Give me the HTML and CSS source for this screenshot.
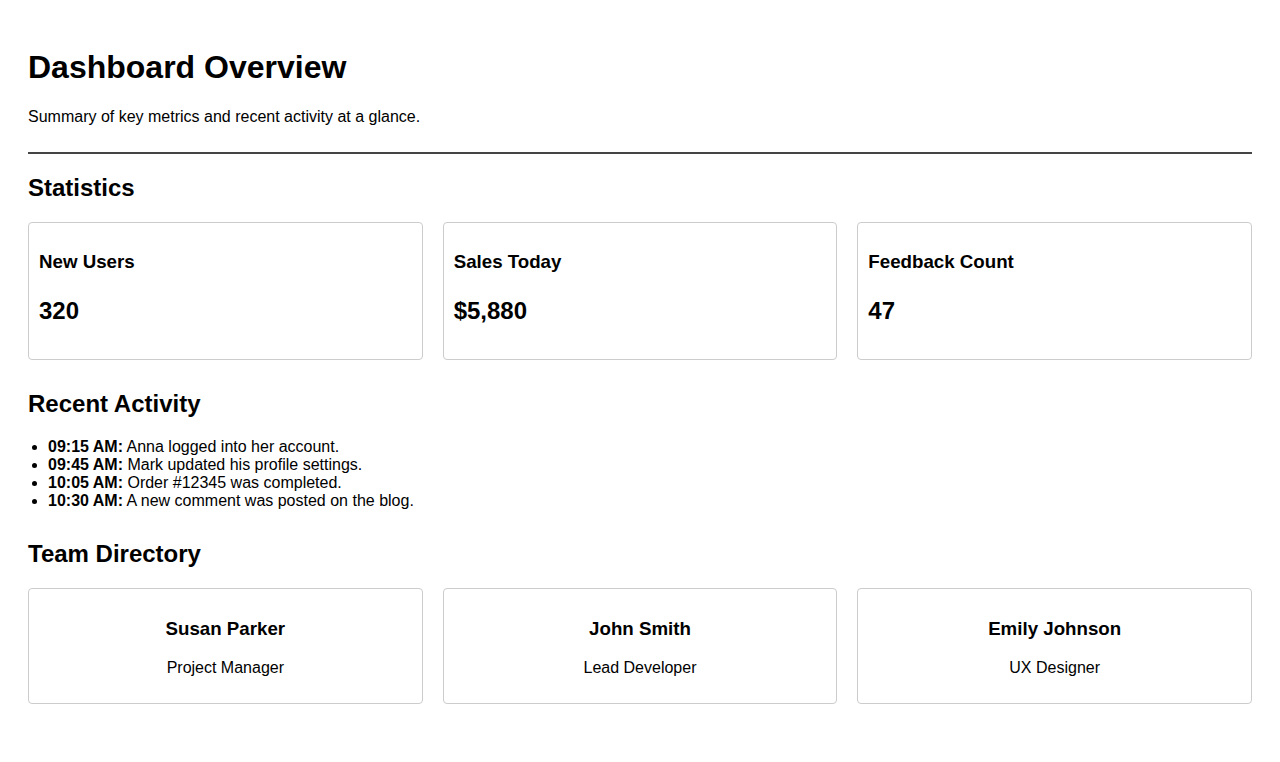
FILE: index.html
```html
<!DOCTYPE html>
<html lang="en">
<head>
<meta charset="utf-8">
<title>Dashboard Overview</title>
<link rel="stylesheet" href="styles.css">
</head>
<body>
<div class="page">
  <header class="header">
    <h1>Dashboard Overview</h1>
    <p>Summary of key metrics and recent activity at a glance.</p>
  </header>

  <section class="section">
    <h2>Statistics</h2>
    <div class="grid">
      <div class="card">
        <h3>New Users</h3>
        <p class="stat">320</p>
      </div>
      <div class="card">
        <h3>Sales Today</h3>
        <p class="stat">$5,880</p>
      </div>
      <div class="card">
        <h3>Feedback Count</h3>
        <p class="stat">47</p>
      </div>
    </div>
  </section>

  <section class="section">
    <h2>Recent Activity</h2>
    <ul class="activity">
      <li><strong>09:15 AM:</strong> Anna logged into her account.</li>
      <li><strong>09:45 AM:</strong> Mark updated his profile settings.</li>
      <li><strong>10:05 AM:</strong> Order #12345 was completed.</li>
      <li><strong>10:30 AM:</strong> A new comment was posted on the blog.</li>
    </ul>
  </section>

  <section class="section">
    <h2>Team Directory</h2>
    <div class="grid">
      <div class="card member">
        <h3>Susan Parker</h3>
        <p>Project Manager</p>
      </div>
      <div class="card member">
        <h3>John Smith</h3>
        <p>Lead Developer</p>
      </div>
      <div class="card member">
        <h3>Emily Johnson</h3>
        <p>UX Designer</p>
      </div>
    </div>
  </section>
</div>
</body>
</html>
```

FILE: styles.css
```css
html, body {
  margin: 0;
  padding: 0;
  background: #fff;
}

body {
  font-family: "Liberation Sans", Arial, sans-serif;
  font-size: 16px;
  color: #000;
}

.page {
  padding: 28px;
}

.header {
  border-bottom: 2px solid #444;
  padding-bottom: 10px;
}

.header h1 {
  font-size: 32px;
  margin: 21.44px 0;
}

.header p {
  margin: 16px 0;
}

.section {
  margin-bottom: 30px;
}

.section h2 {
  font-size: 24px;
  margin: 19.92px 0;
}

.grid {
  display: grid;
  grid-template-columns: repeat(3, 1fr);
  gap: 20px;
}

.card {
  border: 1px solid #ccc;
  border-radius: 4px;
  padding: 10px;
}

.card h3 {
  font-size: 18.72px;
  margin: 18.72px 0;
}

.stat {
  font-size: 24px;
  font-weight: bold;
  margin: 24px 0;
}

.member {
  text-align: center;
}

.member p {
  margin: 16px 0;
}

.activity {
  margin: 16px 0;
  padding-left: 20px;
}

.activity li {
  line-height: 18px;
}
```
